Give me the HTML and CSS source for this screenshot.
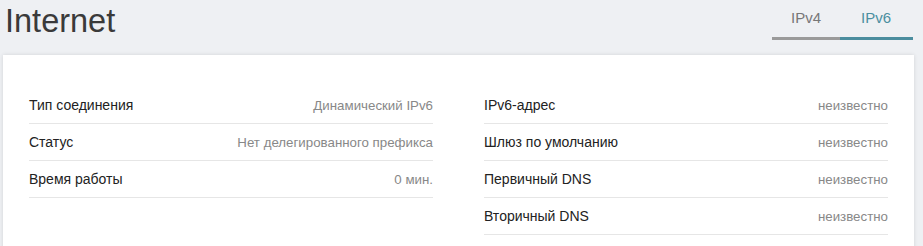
FILE: index.html
```html
<!DOCTYPE html>
<html lang="ru">
<head>
    <meta charset="UTF-8">
    <meta name="viewport" content="width=device-width, initial-scale=1.0">
    <title>Internet</title>
    <link rel="stylesheet" href="styles.css">
</head>
<body>
    <div class="header">
        <h1 class="title">Internet</h1>
        <div class="tabs">
            <div class="tab">IPv4</div>
            <div class="tab active">IPv6</div>
        </div>
    </div>

    <div class="card">
        <div class="column">
            <div class="row">
                <span class="label">Тип соединения</span>
                <span class="value">Динамический IPv6</span>
            </div>
            <div class="row">
                <span class="label">Статус</span>
                <span class="value">Нет делегированного префикса</span>
            </div>
            <div class="row">
                <span class="label">Время работы</span>
                <span class="value">0 мин.</span>
            </div>
        </div>
        <div class="column">
            <div class="row">
                <span class="label">IPv6-адрес</span>
                <span class="value">неизвестно</span>
            </div>
            <div class="row">
                <span class="label">Шлюз по умолчанию</span>
                <span class="value">неизвестно</span>
            </div>
            <div class="row">
                <span class="label">Первичный DNS</span>
                <span class="value">неизвестно</span>
            </div>
            <div class="row">
                <span class="label">Вторичный DNS</span>
                <span class="value">неизвестно</span>
            </div>
        </div>
    </div>
</body>
</html>
```

FILE: styles.css
```css
body {
    font-family: "Liberation Sans", Arial, sans-serif;
    margin: 0;
    background-color: #eef0f3;
    overflow: hidden;
}
.header {
    display: flex;
    justify-content: space-between;
    align-items: flex-start;
    height: 55px;
    padding: 0 10px 0 5px;
}
.title {
    margin: 0;
    font-size: 32.5px;
    font-weight: normal;
    line-height: 42px;
    color: #3a3a3a;
}
.tabs {
    display: flex;
}
.tab {
    font-size: 15px;
    color: #777;
    line-height: 18px;
    padding: 9px 19px 10px;
    border-bottom: 3px solid #9a9a9a;
}
.tab.active {
    padding: 9px 22px 10px 21px;
    color: #4a8fa0;
    border-bottom-color: #4b8d9e;
}
.card {
    display: grid;
    grid-template-columns: 1fr 1fr;
    gap: 51px;
    margin: 0 9px 0 3px;
    padding: 32px 26px 20px;
    background: white;
    box-shadow: 0 0 4px rgba(0,0,0,0.12);
}
.row {
    display: flex;
    justify-content: space-between;
    align-items: center;
    height: 36px;
    border-bottom: 1px solid #e6e6e6;
}
.label {
    font-size: 14px;
    color: #222;
}
.value {
    font-size: 13.3px;
    color: #888;
}
```
